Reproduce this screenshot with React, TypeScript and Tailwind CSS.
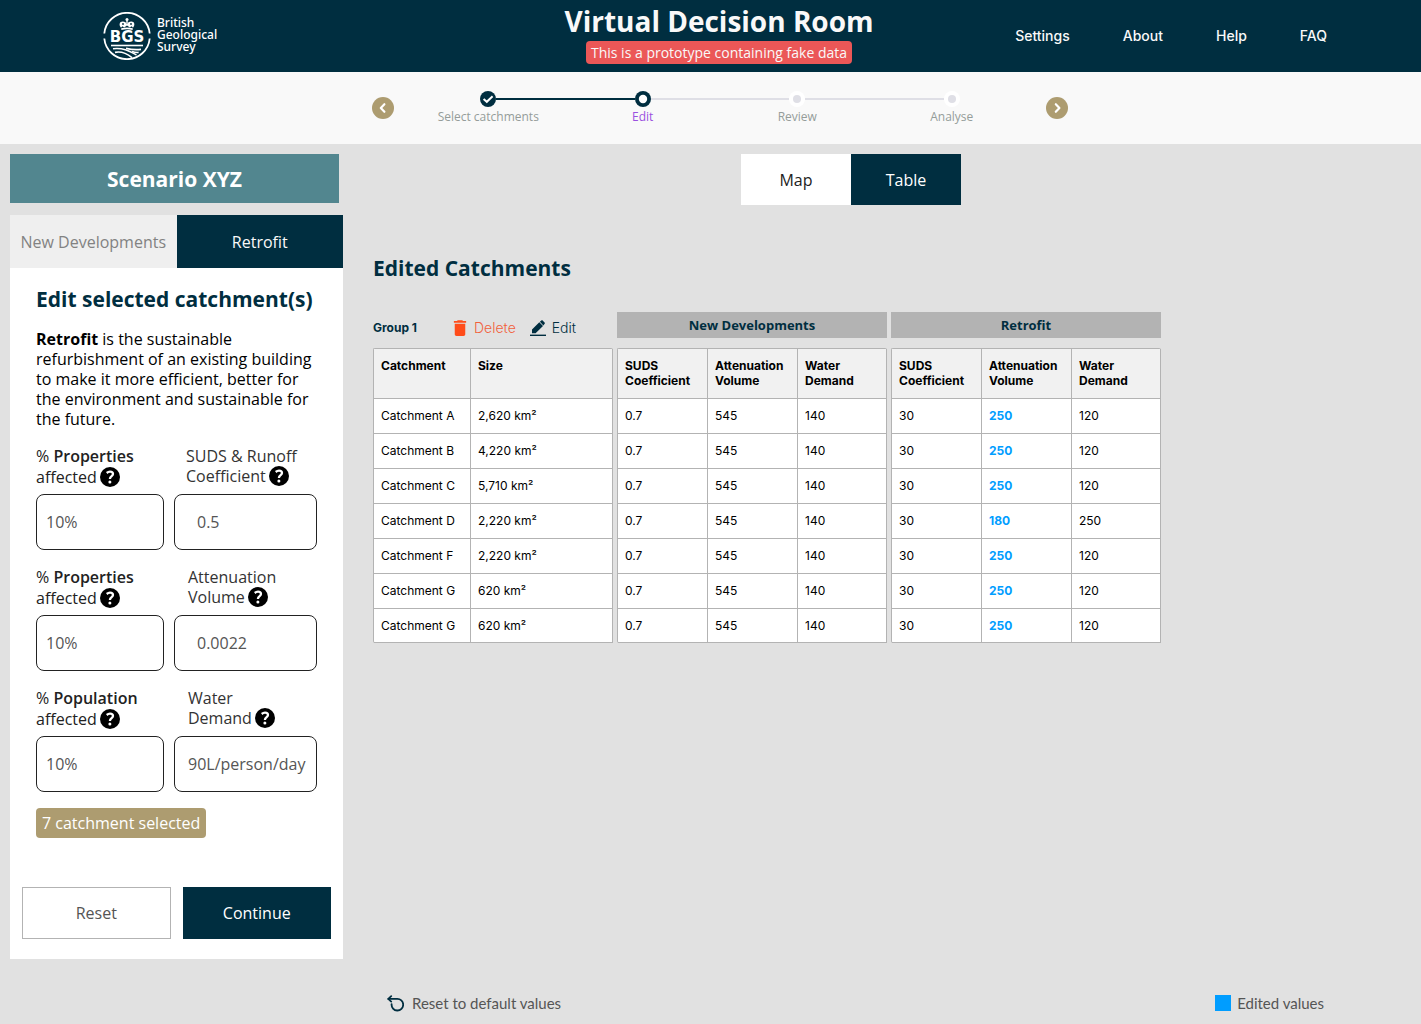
const NAVY = "#002e40";

function Logo() {
  return (
    <a href="#home" className="flex items-center gap-[6px] justify-self-start">
      <svg width="48" height="48" viewBox="0 0 48 48" fill="none" aria-hidden="true">
        <g stroke="white" strokeWidth="1.8">
          <path d="M1.3 21.5A22.8 22.8 0 0 1 46.7 21.5" />
          <path d="M1.3 26.5A22.8 22.8 0 0 0 46.7 26.5" />
        </g>
        <g fill="white">
          <circle cx="24" cy="7.6" r="1.5" />
          <path d="M23.3 8.5h1.4v3h-1.4z" />
          <path d="M18 15.8C15.4 12.6 16.8 9.6 19.6 9.6C22 9.6 23.2 10.8 24 12.2C24.8 10.8 26 9.6 28.4 9.6C31.2 9.6 32.6 12.6 30 15.8L28.6 14.2L26.8 15.4L24 13.6L21.2 15.4L19.4 14.2Z" />
          <path d="M18.2 16.2Q24 14.7 29.8 16.2L29.6 18Q24 16.6 18.4 18Z" />
        </g>
        <circle cx="20" cy="12" r="0.9" fill={NAVY} />
        <circle cx="28" cy="12" r="0.9" fill={NAVY} />
        <text x="24" y="29.5" textAnchor="middle" fill="white" fontSize="15" fontWeight="700" fontFamily="DejaVu Sans, sans-serif">
          BGS
        </text>
        <g stroke="white" strokeWidth="1.6">
          <path d="M8 33.5H40" />
          <path d="M10 36.8C20 35.6 26 39 33.5 43" />
          <path d="M12 40.4C18 39.2 24 41.6 29 45.6" />
          <path d="M23 36.4C28 37.6 33 38 38 37.4" />
          <path d="M29 39.4C31 40.2 33 40.6 35.6 40.4" />
        </g>
      </svg>
      <span className="pb-0.5 font-['Noto_Sans',sans-serif] text-xs leading-3 font-medium text-white">
        <span className="block">British</span>
        <span className="block">Geological</span>
        <span className="block">Survey</span>
      </span>
    </a>
  );
}

function HelpIcon() {
  return (
    <svg width="20" height="20" viewBox="0 0 20 20" aria-hidden="true">
      <circle cx="10" cy="10" r="10" />
      <path d="M6.7 6C7.7 5.2 8.8 4.7 10 4.7C11.9 4.7 13 5.6 13 7.1C13 9.2 9.9 9.2 9.9 12" fill="none" stroke="white" strokeWidth="2.3" />
      <circle cx="9.9" cy="14.9" r="1.5" fill="white" />
    </svg>
  );
}

function Chevron({ d }: { d: string }) {
  return (
    <svg width="22" height="22" viewBox="0 0 22 22" fill="none" stroke="white" strokeWidth="2.2" strokeLinecap="round" strokeLinejoin="round" aria-hidden="true">
      <path d={d} />
    </svg>
  );
}

const steps = [
  { label: "Select catchments", state: "done" },
  { label: "Edit", state: "current" },
  { label: "Review", state: "todo" },
  { label: "Analyse", state: "todo" },
];

function StepDot({ state }: { state: string }) {
  if (state === "todo") {
    return (
      <svg width="16" height="16" viewBox="0 0 16 16" aria-hidden="true">
        <circle cx="8" cy="8" r="8" fill="white" />
        <circle cx="8" cy="8" r="4" fill="#dfdfe6" />
      </svg>
    );
  }
  return (
    <svg width="16" height="16" viewBox="0 0 16 16" aria-hidden="true">
      <circle cx="8" cy="8" r="8" fill={NAVY} />
      {state === "done" ? (
        <path d="M3.6 8L6.8 10.8L12.6 5.2" fill="none" stroke="white" strokeWidth="2" />
      ) : (
        <circle cx="8" cy="8" r="4.2" fill="white" />
      )}
    </svg>
  );
}

function Stepper() {
  const round = "size-[22px] rounded-full bg-[#ad9c70]";
  return (
    <nav aria-label="Progress" className="flex h-[72px] items-center justify-center gap-[17px] bg-[#f9f9f9] pl-[19px]">
      <button className={round} aria-label="Previous step">
        <Chevron d="M12.4 7.2L8.8 11L12.4 14.8" />
      </button>
      <ol className="grid w-[618px] grid-cols-4 pt-0.5">
        {steps.map((s, i) => (
          <li key={s.label} className="flex flex-col items-center">
            <div className="flex w-full items-center">
              <span className={`h-0.5 flex-1 ${i === 0 ? "" : i === 1 ? "bg-[#002e40]" : "bg-[#dfdfe6]"}`} />
              <StepDot state={s.state} />
              <span className={`h-0.5 flex-1 ${i === 0 ? "bg-[#002e40]" : i === 3 ? "" : "bg-[#dfdfe6]"}`} />
            </div>
            <span className={`text-xs leading-5 ${i === 1 ? "text-[#9b51e0]" : "text-[#959d9a]"}`}>{s.label}</span>
          </li>
        ))}
      </ol>
      <button className={round} aria-label="Next step">
        <Chevron d="M9.8 7.2L13.4 11L9.8 14.8" />
      </button>
    </nav>
  );
}

const fields = [
  { id: "suds", share: "Properties", lines: ["SUDS & Runoff", "Coefficient"], value: "0.5", pad: "pl-[22px]", labelPad: "pl-3" },
  { id: "attenuation", share: "Properties", lines: ["Attenuation", "Volume"], value: "0.0022", pad: "pl-[22px]", labelPad: "pl-3.5" },
  { id: "water", share: "Population", lines: ["Water", "Demand"], value: "90L/person/day", pad: "pl-[13px]", labelPad: "pl-3.5" },
];

function Sidebar() {
  const input = "h-14 w-full rounded-lg border border-[#222] bg-white text-base text-[#555]";
  return (
    <aside className="w-[333px] shrink-0">
      <h2 className="mr-1 mb-3 flex h-[49px] items-center justify-center bg-[#52868f] pt-0.5 text-[21px] font-bold text-white">Scenario XYZ</h2>
      <div className="grid h-[53px] grid-cols-2">
        <button className="bg-[#efefef] text-[#828282]">New Developments</button>
        <button className="bg-[#002e40] text-[#f9f9f9]">Retrofit</button>
      </div>
      <form className="bg-white px-3 pt-[17px] pb-5" onSubmit={(e) => e.preventDefault()}>
        <div className="px-3.5">
          <h3 className="text-[21px] leading-7 font-bold text-[#002e40]">Edit selected catchment(s)</h3>
          <p className="mt-4 leading-5 text-black">
            <b>Retrofit</b> is the sustainable refurbishment of an existing building to make it more efficient, better for the environment and sustainable for the future.
          </p>
          <div className="mt-[17px] flex flex-col gap-[17px]">
            {fields.map((f) => (
              <div key={f.id} className="grid grid-cols-[128px_143px] gap-x-[10px]">
                <div className="flex flex-col">
                  <label htmlFor={f.id + "-share"} className="mb-1.5 text-[#222]">
                    <span className="block leading-5">
                      % <span className="font-semibold">{f.share}</span>
                    </span>
                    <span className="flex items-center gap-[3px] leading-[22px]">
                      affected <HelpIcon />
                    </span>
                  </label>
                  <input id={f.id + "-share"} defaultValue="10%" className={`${input} pl-[9px]`} />
                </div>
                <div className="flex flex-col">
                  <label htmlFor={f.id} className={`mb-2 text-[#333] ${f.labelPad}`}>
                    <span className="block leading-5">{f.lines[0]}</span>
                    <span className="flex items-center gap-[3px] leading-5">
                      {f.lines[1]} <HelpIcon />
                    </span>
                  </label>
                  <input id={f.id} defaultValue={f.value} className={`${input} ${f.pad}`} />
                </div>
              </div>
            ))}
          </div>
          <p className="mt-4 w-fit rounded-[4px] bg-[#ad9c70] px-1.5 leading-[30px] text-white">7 catchment selected</p>
        </div>
        <div className="mt-[49px] grid h-[52px] grid-cols-2 gap-3">
          <button type="reset" className="border border-[#b3b3b3] text-[#555]">
            Reset
          </button>
          <button className="bg-[#002e40] text-white">Continue</button>
        </div>
      </form>
    </aside>
  );
}

const catchments = [
  { name: "Catchment A", size: "2,620", volume: "250", demand: "120" },
  { name: "Catchment B", size: "4,220", volume: "250", demand: "120" },
  { name: "Catchment C", size: "5,710", volume: "250", demand: "120" },
  { name: "Catchment D", size: "2,220", volume: "180", demand: "250" },
  { name: "Catchment F", size: "2,220", volume: "250", demand: "120" },
  { name: "Catchment G", size: "620", volume: "250", demand: "120" },
  { name: "Catchment G", size: "620", volume: "250", demand: "120" },
];

const measures = ["SUDS Coefficient", "Attenuation Volume", "Water Demand"];

function DataTable({ label, heads, rows, first, edited }: { label: string; heads: string[]; rows: string[][]; first: string; edited?: number }) {
  return (
    <table aria-label={label} className="w-full table-fixed border-separate border-spacing-0 rounded-[2px] border-t border-l border-[#b3b3b3] bg-white text-left font-['Inter',sans-serif] text-xs text-black">
      <colgroup>
        <col className={first} />
        {heads.length === 3 && <col className={first} />}
      </colgroup>
      <thead>
        <tr className="h-[50px] bg-[#f1f1f1] align-top">
          {heads.map((h) => (
            <th key={h} scope="col" className="border-r border-b border-[#b3b3b3] px-[7px] pt-[9px] leading-[15px] font-bold">
              {h}
            </th>
          ))}
        </tr>
      </thead>
      <tbody>
        {rows.map((r, i) => (
          <tr key={i} className="h-[35px] last:h-[34px]">
            {r.map((c, j) => (
              <td key={j} className={`border-r border-b border-[#b3b3b3] px-[7px] ${j === edited ? "font-bold text-[#009dff]" : ""}`}>
                {c}
              </td>
            ))}
          </tr>
        ))}
      </tbody>
    </table>
  );
}

function GroupTitle({ children }: { children: string }) {
  return <h3 className="mb-2.5 bg-[#b3b3b3] text-center text-[13px] leading-[26px] font-bold text-[#002e40]">{children}</h3>;
}

function Catchments() {
  return (
    <main className="flex flex-1 flex-col pb-[11px]">
      <div className="flex h-[51px] self-center">
        <button className="w-[110px] bg-white text-[#222]">Map</button>
        <button className="w-[110px] bg-[#002e40] text-white">Table</button>
      </div>
      <h2 className="mt-[49px] text-[21px] leading-7 font-bold text-[#002e40]">Edited Catchments</h2>
      <div className="mt-[30px] flex gap-1">
        <section className="w-[240px]">
          <div className="mb-2.5 flex h-[26px] items-center pt-1.5 font-['Inter',sans-serif]">
            <h3 className="w-20 text-xs font-bold text-[#002e40]">Group 1</h3>
            <button className="flex items-center gap-[7px] text-sm font-light text-[#f2603a]">
              <svg width="14" height="16" viewBox="4 3 16 18" fill="#ff4c1a" aria-hidden="true">
                <path d="M6 19c0 1.1.9 2 2 2h8c1.1 0 2-.9 2-2V7H6v12zM19 4h-3.5l-1-1h-5l-1 1H5v2h14V4z" />
              </svg>
              Delete
            </button>
            <button className="ml-3.5 flex items-center gap-1.5 text-sm font-light text-[#002e40]">
              <svg width="16" height="16" viewBox="0 0 16 16" fill={NAVY} aria-hidden="true">
                <path d="M2 13.2V9.6L9.3 2.3L13 6L5.6 13.2zM9.9 1.8L11.6 0.3Q12 0 12.4 0.3L14.8 2.7Q15.1 3.1 14.8 3.6L13.4 5.4z" />
                <path d="M0 14.6h16v1.4H0z" />
              </svg>
              Edit
            </button>
          </div>
          <DataTable label="Catchments" heads={["Catchment", "Size"]} rows={catchments.map((c) => [c.name, `${c.size} km²`])} first="w-[97px]" />
        </section>
        <section className="w-[270px]">
          <GroupTitle>New Developments</GroupTitle>
          <DataTable label="New Developments" heads={measures} rows={catchments.map(() => ["0.7", "545", "140"])} first="w-[90px]" />
        </section>
        <section className="w-[270px]">
          <GroupTitle>Retrofit</GroupTitle>
          <DataTable label="Retrofit" heads={measures} rows={catchments.map((c) => ["30", c.volume, c.demand])} first="w-[90px]" edited={1} />
        </section>
      </div>
      <footer className="mt-auto flex items-center justify-between pr-[5px] pl-3.5 font-['Lato',sans-serif] text-[15px] leading-5 text-[#555]">
        <button className="flex items-center gap-2">
          <svg width="17" height="17" viewBox="0 0 17 17" fill="none" stroke={NAVY} strokeWidth="1.8" strokeLinecap="round" aria-hidden="true">
            <path d="M1.4 3.9H10A5.8 5.8 0 1 1 4.6 9.2" />
            <path d="M4.2 1.2L1.3 3.9L4.2 6.6" strokeLinejoin="round" />
          </svg>
          Reset to default values
        </button>
        <p className="flex items-center gap-1.5">
          <span className="size-4 bg-[#009dff]" />
          Edited values
        </p>
      </footer>
    </main>
  );
}

export default function App() {
  return (
    <div className="flex min-h-screen flex-col bg-[#e1e1e1] font-['Open_Sans','Noto_Sans',sans-serif] text-base">
      <header className="grid h-[72px] grid-cols-[1fr_auto_1fr] items-center bg-[#002e40] pr-[94px] pl-[103px]">
        <Logo />
        <div className="flex flex-col items-center pb-1.5 pl-2">
          <h1 className="mb-0.5 text-[28px] leading-9 font-bold text-[#f9f9f9]">Virtual Decision Room</h1>
          <p className="rounded-[4px] bg-[#eb5757] px-[5px] text-sm leading-[23px] text-[#f9f9f9]">This is a prototype containing fake data</p>
        </div>
        <nav aria-label="Main" className="flex gap-[53px] justify-self-end font-['Inter',sans-serif] text-sm font-medium text-[#f9f9f9]">
          <a href="#settings">Settings</a>
          <a href="#about">About</a>
          <a href="#help">Help</a>
          <a href="#faq">FAQ</a>
        </nav>
      </header>
      <Stepper />
      <div className="flex flex-1 items-stretch gap-[30px] pt-2.5 pr-[92px] pl-2.5">
        <Sidebar />
        <Catchments />
      </div>
    </div>
  );
}
